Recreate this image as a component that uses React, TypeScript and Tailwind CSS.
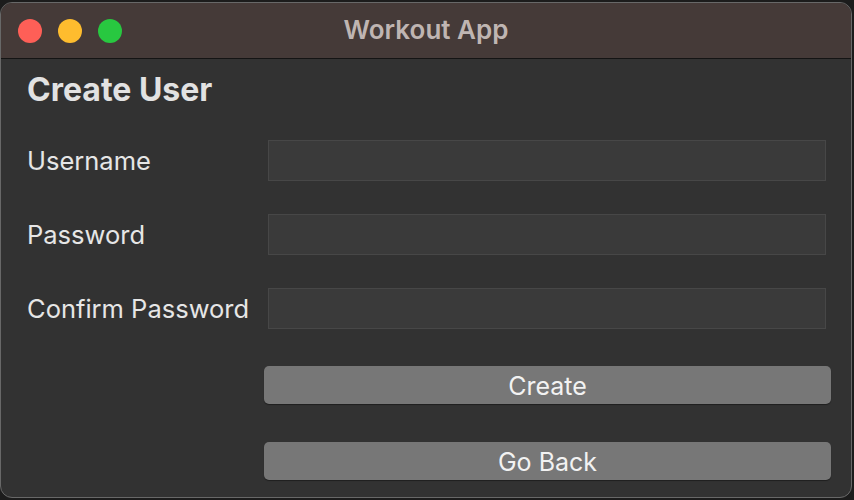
import React from 'react';

const fields = ['Username', 'Password', 'Confirm Password'];

const App: React.FC = () => {
    return (
        <div className="w-[854px] h-[500px] bg-[#1c1c1c] pt-[2px] pr-[2px] pb-[2px]" style={{ fontFamily: 'Inter, "Liberation Sans", sans-serif' }}>
            <div className="h-full flex flex-col rounded-[12px] border border-[#686868] overflow-hidden bg-[#323232]">
                <div className="h-[56px] shrink-0 bg-[#453a38] border-b border-[#141414] flex items-center relative">
                    <div className="flex gap-[16px] pl-[17px]">
                        <span className="w-[24px] h-[24px] rounded-full bg-[#fe5f57]" />
                        <span className="w-[24px] h-[24px] rounded-full bg-[#febc2e]" />
                        <span className="w-[24px] h-[24px] rounded-full bg-[#28c840]" />
                    </div>
                    <div className="absolute inset-0 flex items-center justify-center pb-[2px] text-[26px] font-semibold text-[#bfb5b2]">
                        Workout App
                    </div>
                </div>

                <div className="flex-1 pl-[26px] pr-[25px]">
                    <h1 className="mt-[13px] h-[36px] leading-[36px] text-[32px] font-bold text-[#e2e2e2]">Create User</h1>

                    <div className="mt-[32px] flex flex-col gap-[33px]">
                        {fields.map((f) => (
                            <div key={f} className="flex items-center">
                                <label className="w-[241px] pt-[2px] text-[25.5px] text-[#e6e6e6]">{f}</label>
                                <input
                                    type={f === 'Username' ? 'text' : 'password'}
                                    className="flex-1 h-[41px] bg-[#3a3a3a] border border-[#474747] outline-none text-white px-2"
                                />
                            </div>
                        ))}
                    </div>

                    <div className="ml-[237px] mr-[-5px] mt-[37px] flex flex-col gap-[38px]">
                        <button className="h-[38px] pt-[2px] rounded-[5px] bg-[#777777] text-[25px] text-[#f2f2f2] shadow-[0_1px_1px_rgba(0,0,0,0.4)]">
                            Create
                        </button>
                        <button className="h-[38px] pt-[2px] rounded-[5px] bg-[#777777] text-[25px] text-[#f2f2f2] shadow-[0_1px_1px_rgba(0,0,0,0.4)]">
                            Go Back
                        </button>
                    </div>
                </div>
            </div>
        </div>
    );
};

export default App;
